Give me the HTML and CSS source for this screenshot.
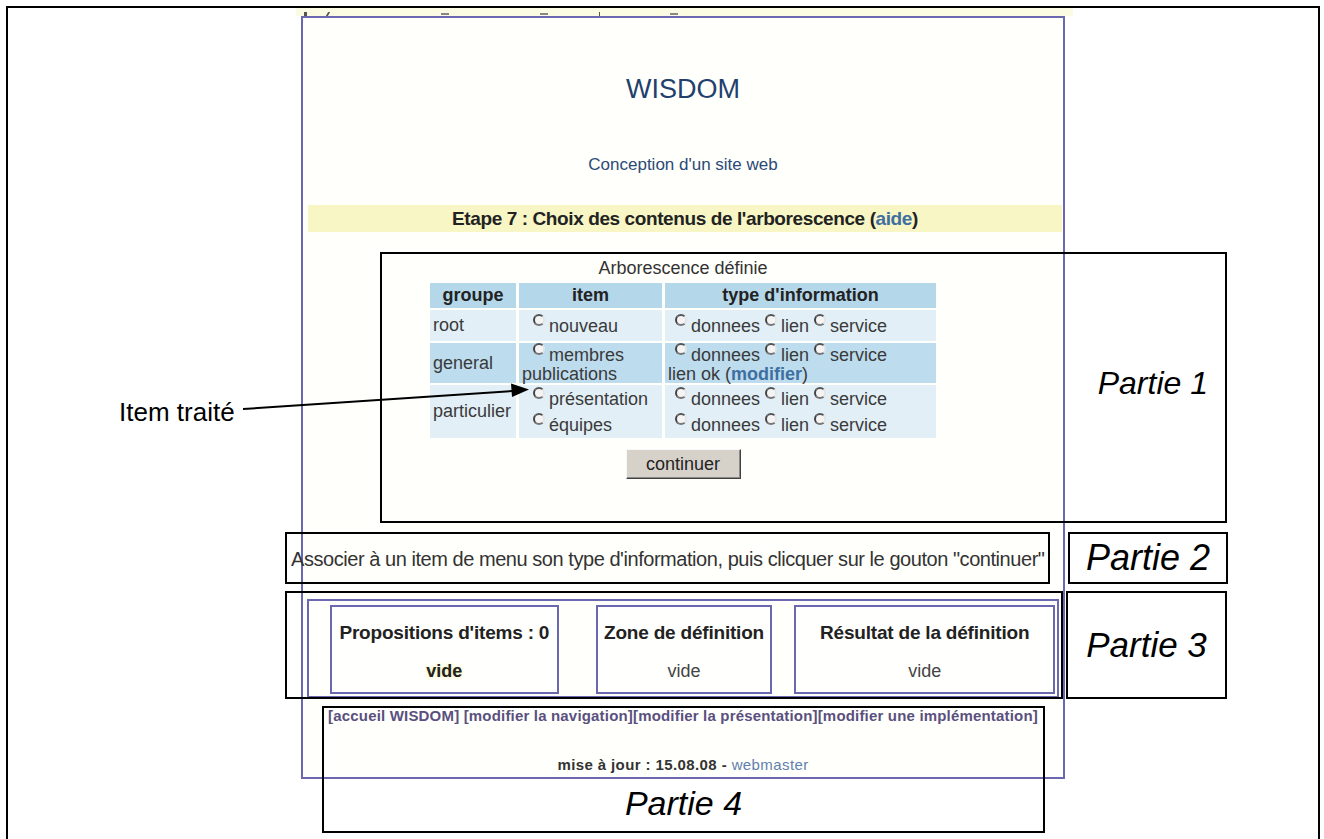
FILE: index.html
```html
<!DOCTYPE HTML>
<html>
    <head>
        <meta charset="utf-8">
        <link rel="stylesheet" href="styles.css">
    </head>

    <body>
        <div class="figure">
            <div class="topbar">
                <span class="mark mark-a"></span>
                <span class="mark mark-b"></span>
                <span class="mark mark-dash m1"></span>
                <span class="mark mark-dash m2"></span>
                <span class="mark mark-tick"></span>
                <span class="mark mark-dash m3"></span>
            </div>

            <div class="page">
                <h1 class="title">WISDOM</h1>
                <p class="subtitle">Conception d'un site web</p>
                <div class="step">Etape 7 : Choix des contenus de l'arborescence (<a class="link">aide</a>)</div>

                <div class="tree">
                    <div class="caption">Arborescence définie</div>
                    <table class="grid">
                        <tr class="head">
                            <th class="col-group">groupe</th>
                            <th class="col-item">item</th>
                            <th class="col-type">type d'information</th>
                        </tr>
                        <tr class="light row-root">
                            <td class="group">root</td>
                            <td class="item"><div class="line"><span class="radio"></span>nouveau</div></td>
                            <td class="type"><div class="line"><span class="radio"></span>donnees <span class="radio"></span>lien <span class="radio"></span>service</div></td>
                        </tr>
                        <tr class="dark row-general">
                            <td class="group">general</td>
                            <td class="item">
                                <div class="line"><span class="radio"></span>membres</div>
                                <div class="plain">publications</div>
                            </td>
                            <td class="type">
                                <div class="line"><span class="radio"></span>donnees <span class="radio"></span>lien <span class="radio"></span>service</div>
                                <div class="plain">lien ok (<a class="link strong">modifier</a>)</div>
                            </td>
                        </tr>
                        <tr class="light row-part">
                            <td class="group">particulier</td>
                            <td class="item">
                                <div class="line"><span class="radio"></span>présentation</div>
                                <div class="line"><span class="radio"></span>équipes</div>
                            </td>
                            <td class="type">
                                <div class="line"><span class="radio"></span>donnees <span class="radio"></span>lien <span class="radio"></span>service</div>
                                <div class="line"><span class="radio"></span>donnees <span class="radio"></span>lien <span class="radio"></span>service</div>
                            </td>
                        </tr>
                    </table>
                    <div class="actions"><button class="btn">continuer</button></div>
                </div>

                <p class="hint">Associer à un item de menu son type d'information, puis clicquer sur le gouton "continuer"</p>

                <div class="cards">
                    <div class="card card-props">
                        <div class="card-title">Propositions d'items : 0</div>
                        <div class="card-value strong glow">vide</div>
                    </div>
                    <div class="card card-zone">
                        <div class="card-title">Zone de définition</div>
                        <div class="card-value">vide</div>
                    </div>
                    <div class="card card-result">
                        <div class="card-title">Résultat de la définition</div>
                        <div class="card-value">vide</div>
                    </div>
                </div>

                <div class="footer">
                    <div class="nav">[accueil WISDOM] [modifier la navigation][modifier la présentation][modifier une implémentation]</div>
                    <div class="update">mise à jour : 15.08.08 - <a class="webmaster">webmaster</a></div>
                </div>
            </div>

            <!-- annotations over the screenshot -->
            <div class="note note-1"><span class="label">Partie 1</span></div>
            <div class="note note-2a"></div>
            <div class="note note-2b"><span class="label label-2">Partie 2</span></div>
            <div class="note note-3a"></div>
            <div class="note note-3b"><span class="label label-3">Partie 3</span></div>
            <div class="note note-4"><span class="label label-4">Partie 4</span></div>

            <div class="pointer-text">Item traité</div>
            <svg class="pointer" width="300" height="40" viewBox="0 0 300 40">
                <line x1="2" y1="29" x2="272" y2="11" stroke="#000" stroke-width="2"/>
                <polygon points="288,9.5 270,3.5 271,17" fill="#000"/>
            </svg>
        </div>
    </body>
</html>
```

FILE: styles.css
```css
body{
    margin: 0;
    background-color: #fff;
    font-family: "Liberation Sans", Arial, sans-serif;
    color: #333;
}

.figure{
    position: relative;
    margin: 6px 4px 0 6px;
    height: 860px;
    border: 2px solid #000;
    border-bottom: 0;
}

/* cut text at the top of the screenshot */
.topbar{
    display: flex;
    align-items: flex-end;
    margin-left: 288px;
    width: 777px;
    height: 8px;
    background-color: #fbfbe4;
}

.mark{
    display: block;
    background-color: #555;
}

.mark-a{ width: 3px; height: 4px; margin-left: 8px; }
.mark-b{ width: 2px; height: 4px; margin-left: 20px; transform: skewX(-30deg); }
.mark-dash{ width: 8px; height: 2px; margin-bottom: 1px; background-color: #888; }
.m1{ margin-left: 112px; }
.m2{ margin-left: 91px; }
.mark-tick{ width: 1px; height: 4px; margin-left: 51px; }
.m3{ margin-left: 70px; }

.page{
    box-sizing: border-box;
    margin-left: 293px;
    width: 764px;
    height: 763px;
    border: 2px solid #6b67b0;
    background-color: #fffffb;
    text-align: center;
}

.title{
    margin: 55px 0 0;
    font-size: 27px;
    line-height: 32px;
    font-weight: normal;
    color: #22406e;
}

.subtitle{
    margin: 50px 0 0;
    font-size: 17px;
    line-height: 20px;
    color: #2b4a78;
}

.step{
    margin: 30px 1px 0 5px;
    height: 27px;
    line-height: 27px;
    background-color: #f7f6c4;
    font-size: 19px;
    font-weight: bold;
    letter-spacing: -0.4px;
    color: #222;
}

.link{
    color: #3f6f9f;
}

.strong{
    font-weight: bold;
}

.caption{
    margin-top: 26px;
    font-size: 18px;
    line-height: 20px;
    color: #333;
}

.grid{
    margin: 3px auto 0;
    border-spacing: 3px 2px;
    font-size: 18px;
    color: #3a3a3a;
    text-align: left;
}

.grid th{
    height: 25px;
    padding: 0;
    background-color: #b5d7ea;
    text-align: center;
    font-size: 18px;
    color: #222;
}

.col-group{ width: 86px; }
.col-item{ width: 143px; }
.col-type{ width: 271px; }

.light td{ background-color: #e2eff7; }
.dark td{ background-color: #bddcee; }

.grid td{
    padding: 0 2px 0 3px;
    vertical-align: middle;
    white-space: nowrap;
}

.row-root td{ height: 31px; }
.row-general td{ height: 35px; }
.row-part td{ height: 53px; }

.line{
    line-height: 23px;
}

.row-part .line{
    line-height: 26px;
}

.plain{
    line-height: 14px;
    padding-bottom: 2px;
}

.item .line{ padding-left: 11px; }
.type .line{ padding-left: 7px; }

.radio{
    display: inline-block;
    box-sizing: border-box;
    width: 12px;
    height: 12px;
    margin-right: 4px;
    vertical-align: 6px;
    border: 2px solid;
    border-color: #555 #e4e4e4 #777 #444;
    border-radius: 50%;
    background-color: #f4f4f4;
}

.actions{
    margin-top: 9px;
}

.btn{
    width: 115px;
    height: 30px;
    padding: 0;
    font-family: "Liberation Sans", Arial, sans-serif;
    font-size: 18px;
    color: #222;
    background-color: #d6d2ca;
    border: 1px solid;
    border-color: #f8f8f8 #404040 #404040 #f8f8f8;
    box-shadow: inset -1px -1px #8a8a8a;
}

.hint{
    margin: 69px 0 0 -12px;
    text-align: left;
    font-size: 20px;
    line-height: 22px;
    letter-spacing: -0.45px;
    color: #333;
}

.cards{
    display: flex;
    margin: 29px 4px 0 4px;
    padding: 4px 2px 2px 21px;
    border: 2px solid #6b67b0;
}

.card{
    box-sizing: border-box;
    height: 89px;
    border: 2px solid #6b67b0;
    background-color: #fffffd;
}

.card-props{ width: 229px; }
.card-zone{ width: 177px; margin-left: 37px; }
.card-result{ width: 261px; margin-left: 22px; }

.card-title{
    margin-top: 16px;
    font-size: 19px;
    line-height: 20px;
    font-weight: bold;
    letter-spacing: -0.2px;
    color: #222;
}

.card-value{
    margin-top: 18px;
    font-size: 18px;
    line-height: 20px;
    color: #444;
}

.glow{
    color: #222;
    text-shadow: 0 0 4px #f2f09a;
}

.footer{
    margin-top: 9px;
}

.nav{
    font-size: 15px;
    line-height: 18px;
    font-weight: bold;
    letter-spacing: 0.18px;
    color: #5a5080;
}

.update{
    margin-top: 31px;
    font-size: 15px;
    line-height: 18px;
    font-weight: bold;
    letter-spacing: 0.4px;
    color: #333;
}

.webmaster{
    font-weight: normal;
    color: #5f7fae;
}

/* annotation layer */
.note{
    position: absolute;
    box-sizing: border-box;
    display: flex;
    align-items: center;
    justify-content: center;
    border: 2px solid #000;
}

.label{
    font-size: 32px;
    font-style: italic;
    color: #000;
}

.label-2{ font-size: 36px; }
.label-3{ font-size: 35px; }
.label-4{ font-size: 34px; }

.note-1{
    left: 372px;
    top: 244px;
    width: 847px;
    height: 271px;
    justify-content: flex-end;
    padding-right: 17px;
    padding-bottom: 8px;
}

.note-2a{ left: 277px; top: 524px; width: 765px; height: 52px; }
.note-2b{ left: 1060px; top: 524px; width: 160px; height: 52px; }
.note-3a{ left: 277px; top: 583px; width: 778px; height: 108px; }
.note-3b{ left: 1058px; top: 583px; width: 161px; height: 108px; }

.note-4{
    left: 314px;
    top: 698px;
    width: 723px;
    height: 127px;
    padding-top: 68px;
}

.pointer-text{
    position: absolute;
    left: 111px;
    top: 389px;
    font-size: 26px;
    line-height: 30px;
    color: #000;
}

.pointer{
    position: absolute;
    left: 233px;
    top: 372px;
}
```
